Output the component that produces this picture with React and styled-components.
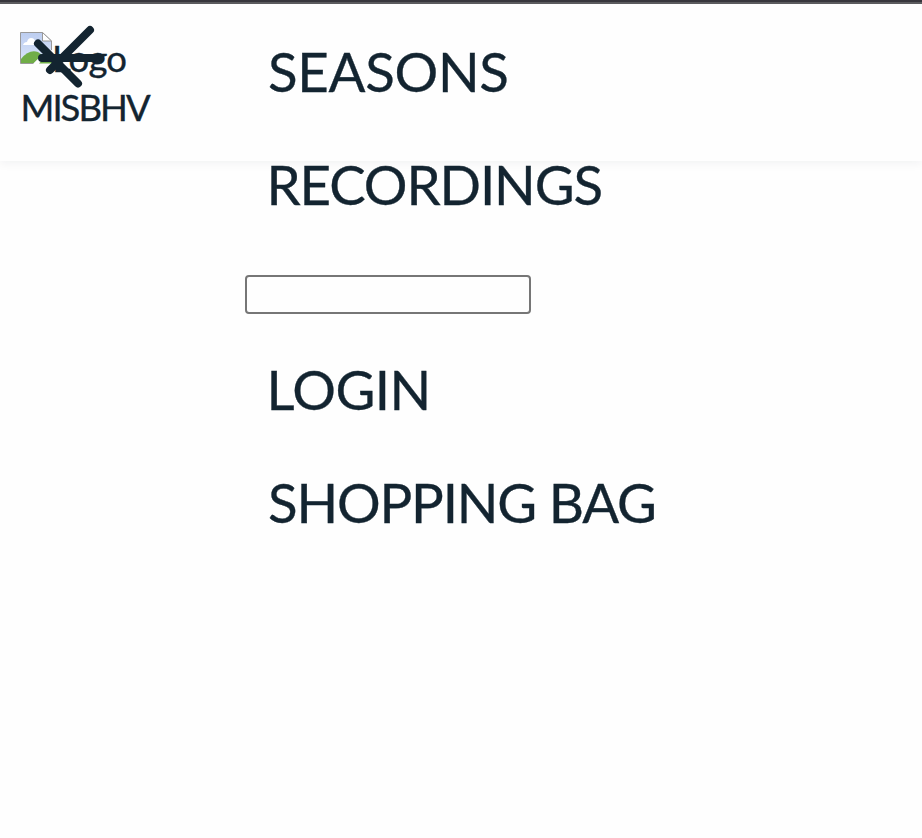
import React from "react";
import styled, { createGlobalStyle } from "styled-components";

const GlobalStyle = createGlobalStyle`
  * { box-sizing: border-box; }
  body {
    margin: 0;
    overflow: hidden;
    background: #fefefe;
    color: #132430;
    font-family: "Futura PT", Futura, Lato, sans-serif;
    -webkit-text-stroke: 0.35px #132430;
  }
`;

const Page = styled.div`
  display: grid;
  grid-template-columns: 245px 1fr;
  align-items: start;
  height: 838px;
  border-top: 2px solid #38373d;
  box-shadow: inset 0 2px 0 #5b5b5e;
`;

const Header = styled.header`
  grid-area: 1 / 1 / 2 / 3;
  height: 159px;
  padding: 30px 20px;
  box-shadow: 0 2px 10px rgba(19, 36, 48, 0.06);
`;

const Brand = styled.a`
  display: grid;
  grid-template-columns: 32px 1fr;
  width: 140px;
`;

const BrandWord = styled.span`
  grid-column: ${(p) => (p.$wide ? "1 / 3" : "2")};
  font-size: 36.5px;
  line-height: ${(p) => (p.$wide ? "46px" : "52px")};
  letter-spacing: ${(p) => p.$tracking};
  padding-left: ${(p) => p.$indent};
  white-space: nowrap;
`;

const BrokenImage = styled.svg`
  width: 32px;
  height: 32px;
`;

const CloseButton = styled.button`
  position: absolute;
  left: 30px;
  top: 20px;
  width: 80px;
  height: 72px;
  padding: 0;
  border: 0;
  background: none;

  svg { display: block; }
`;

const Menu = styled.nav`
  grid-area: 1 / 2;
  display: flex;
  flex-direction: column;
  align-items: flex-start;
  padding-top: 13px;
`;

const MenuLink = styled.a`
  height: 113px;
  line-height: 113px;
  padding-left: ${(p) => p.$indent};
  font-size: 54.6px;
  letter-spacing: ${(p) => p.$tracking};
  white-space: nowrap;
`;

const SearchField = styled.input`
  width: 286px;
  height: 39px;
  margin: 34px 0 19px;
  border: 2px solid #767676;
  border-radius: 4px;
  background: #fefefe;
  outline: none;
`;

export default function App() {
  return (
    <>
      <GlobalStyle />
      <Page>
        <Header>
          <Brand>
            <BrokenImage viewBox="0 0 32 32" aria-hidden="true">
              <defs>
                <linearGradient id="sky" x1="0" y1="0" x2="0" y2="1">
                  <stop offset="0" stopColor="#bccdf0" />
                  <stop offset="1" stopColor="#dce6fa" />
                </linearGradient>
              </defs>
              <path d="M.5.5h22l9 8.5v22.5H.5z" fill="url(#sky)" stroke="#999" />
              <path d="M3 13q1-3 4-3 1-4 4-4 4 0 4 4 3 0 3 3z" fill="#fff" />
              <path d="M1 31v-4Q9 17 18 20l4 3-8 8z" fill="#70ad47" />
              <path d="M13 32l11-11 8-3v14z" fill="#fefefe" />
              <path d="M19 31.5l4-4h9v4z" fill="#70ad47" />
              <path d="M22.5.5V9h9z" fill="#fff" stroke="#999" />
            </BrokenImage>
            <BrandWord $tracking="-0.8px" $indent="0px">Logo</BrandWord>
            <BrandWord $wide $tracking="-2px" $indent="0.5px">MISBHV</BrandWord>
          </Brand>
        </Header>
        <Menu>
          <MenuLink $indent="23px" $tracking="-0.3px">SEASONS</MenuLink>
          <MenuLink $indent="21.5px" $tracking="-1.1px">RECORDINGS</MenuLink>
          <SearchField aria-label="Search" />
          <MenuLink $indent="21.5px" $tracking="-0.5px">LOGIN</MenuLink>
          <MenuLink $indent="23px" $tracking="-1.18px">SHOPPING BAG</MenuLink>
        </Menu>
        <CloseButton aria-label="Close menu">
          <svg width="80" height="72" viewBox="0 0 80 72" fill="none" stroke="#132430" strokeWidth="8" strokeLinecap="round">
            <path d="M60 10 20 50M8 23.5l40 40M12 38h58" />
          </svg>
        </CloseButton>
      </Page>
    </>
  );
}
